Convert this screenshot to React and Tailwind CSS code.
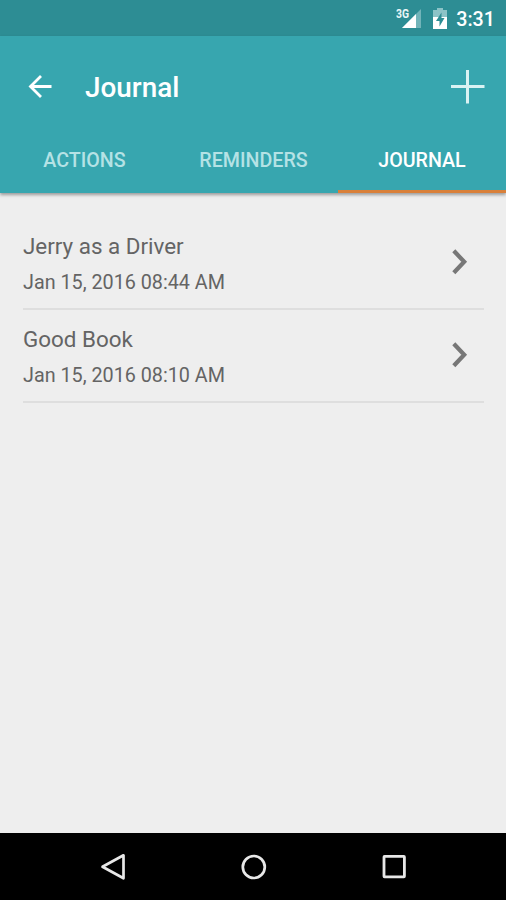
import { useState } from "react";

const TABS = ["Actions", "Reminders", "Journal"];

const ENTRADAS = [
  { id: 1, titulo: "Jerry as a Driver", fecha: "Jan 15, 2016 08:44 AM" },
  { id: 2, titulo: "Good Book", fecha: "Jan 15, 2016 08:10 AM" },
];

export default function App() {
  const [tab, setTab] = useState("Journal");

  return (
    <div className="w-full h-screen flex flex-col overflow-hidden bg-[#eeeeee] font-[Roboto,sans-serif]">
      <StatusBar />

      <header className="h-[157px] shrink-0 flex flex-col bg-[#37a6af] shadow-[0_2px_3px_rgba(0,0,0,0.35)]">
        <div className="h-[101px] flex items-center pl-[28px] pr-[21px]">
          <button type="button" aria-label="Back">
            <svg width="24" height="24" viewBox="0 0 24 24" fill="none" stroke="#fff" strokeWidth="2.8" className="block">
              <path d="M23.5 11.5H2.5M13 1.1L2.5 11.5L13 21.9" />
            </svg>
          </button>
          <h1 className="ml-[33px] pt-[2px] text-[27.9px] leading-8 font-medium text-white">Journal</h1>
          <button type="button" aria-label="Add" className="ml-auto">
            <svg width="34" height="34" viewBox="0 0 34 34" stroke="#d9f2f3" strokeWidth="3" className="block">
              <path d="M0 16.5H33.5M16.5 0V33.5" />
            </svg>
          </button>
        </div>

        <nav className="flex-1 grid grid-cols-[169px_169px_1fr]">
          {TABS.map((t) => (
            <button
              key={t}
              type="button"
              onClick={() => setTab(t)}
              className={`uppercase text-[19.65px] leading-6 font-medium pt-[12px] pb-[17px] border-b-3 ${t === tab ? "text-white border-[#d9803a]" : "text-[#b5e2e5] border-transparent"}`}
            >
              {t}
            </button>
          ))}
        </nav>
      </header>

      <main className="flex-1 pt-[24px] pl-[23px] pr-[22px]">
        {ENTRADAS.map((e) => (
          <Entrada key={e.id} titulo={e.titulo} fecha={e.fecha} />
        ))}
      </main>

      <NavBar />
    </div>
  );
}

function Entrada({ titulo, fecha }) {
  return (
    <div className="h-[93px] flex items-center border-b-2 border-[#dedede]">
      <div className="flex-1 pt-[2px]">
        <p className="text-[22.4px] leading-7 text-[#646464]">{titulo}</p>
        <p className="mt-[11px] text-[19.75px] leading-6 text-[#646464]">{fecha}</p>
      </div>
      <svg width="16" height="26" viewBox="0 0 16 26" fill="none" stroke="#777" strokeWidth="4.2" className="mr-[16px] mb-[2px]">
        <path d="M1.8 1.8L12.2 12.8L1.8 23.8" />
      </svg>
    </div>
  );
}

function StatusBar() {
  return (
    <div className="h-9 shrink-0 flex items-center justify-end pr-[11px] bg-[#2d8d94] text-white">
      <svg width="27" height="22" viewBox="0 0 27 22" className="mr-[10px]">
        <path d="M25 2V21H6Z" fill="#72b4b9" />
        <path d="M20 7V21H6Z" fill="#fff" />
        <rect x="0" y="0" width="14" height="11.5" fill="#2d8d94" />
        <text x="0" y="10.8" fontSize="12.5" fontWeight="700" fill="#e9f6f7" textLength="13" lengthAdjust="spacingAndGlyphs">3G</text>
      </svg>
      <svg width="14" height="21" viewBox="0 0 14 21" className="mr-[9px]">
        <path d="M4 0H10V2H14V9H0V2H4Z" fill="#8cc3c7" />
        <path d="M0 9H14V21H0Z" fill="#fff" />
        <path d="M8.5 4.5L3 13H6.5V18.5L11.5 10H8.5Z" fill="#2d8d94" />
      </svg>
      <span className="pt-[3px] text-[19.7px] leading-6 font-medium">3:31</span>
    </div>
  );
}

function NavBar() {
  return (
    <div className="h-[67px] shrink-0 grid grid-cols-[140px_140px_140px] justify-center items-center justify-items-center bg-black">
      <svg width="28" height="28" viewBox="0 0 28 28" fill="none" stroke="#e8e8e8" strokeWidth="2.7" strokeLinejoin="round">
        <path d="M24.5 2.3V25.3L3.5 13.8Z" />
      </svg>
      <svg width="28" height="28" viewBox="0 0 28 28" fill="none" stroke="#e8e8e8" strokeWidth="2.7">
        <circle cx="14.8" cy="14" r="11" />
      </svg>
      <svg width="28" height="28" viewBox="0 0 28 28" fill="none" stroke="#e8e8e8" strokeWidth="2.8" strokeLinejoin="round">
        <rect x="5" y="3.4" width="20.4" height="20.4" rx="0.5" />
      </svg>
    </div>
  );
}
